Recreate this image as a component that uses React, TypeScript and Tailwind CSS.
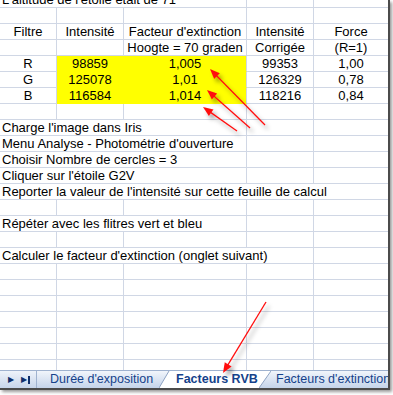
import React from "react";

const COLS = [57, 67, 123, 67, 74];

interface Cell {
  text?: string;
  span?: number;
  align?: "left" | "center";
  yellow?: boolean;
}

const TOP: Cell[][] = [
  [{ text: "L'altitude de l'étoile était de 71", span: 3 }, {}, {}],
  [],
  [
    { text: "Filtre", align: "center" },
    { text: "Intensité", align: "center" },
    { text: "Facteur d'extinction", align: "center" },
    { text: "Intensité", align: "center" },
    { text: "Force", align: "center" },
  ],
  [
    {},
    {},
    { text: "Hoogte = 70 graden", align: "center" },
    { text: "Corrigée", align: "center" },
    { text: "(R=1)", align: "center" },
  ],
  [
    { text: "R", align: "center" },
    { text: "98859", align: "center", yellow: true },
    { text: "1,005", align: "center", yellow: true },
    { text: "99353", align: "center" },
    { text: "1,00", align: "center" },
  ],
  [
    { text: "G", align: "center" },
    { text: "125078", align: "center", yellow: true },
    { text: "1,01", align: "center", yellow: true },
    { text: "126329", align: "center" },
    { text: "0,78", align: "center" },
  ],
  [
    { text: "B", align: "center" },
    { text: "116584", align: "center", yellow: true },
    { text: "1,014", align: "center", yellow: true },
    { text: "118216", align: "center" },
    { text: "0,84", align: "center" },
  ],
  [],
  [{ text: "Charge l'image dans Iris", span: 3 }, {}, {}],
  [{ text: "Menu Analyse - Photométrie d'ouverture", span: 3 }, {}, {}],
  [{ text: "Choisir Nombre de cercles = 3", span: 3 }, {}, {}],
  [{ text: "Cliquer sur l'étoile G2V", span: 3 }, {}, {}],
  [{ text: "Reporter la valeur de l'intensité sur cette feuille de calcul", span: 5 }],
  [],
  [{ text: "Répéter avec les flitres vert et bleu", span: 3 }, {}, {}],
  [],
  [{ text: "Calculer le facteur d'extinction (onglet suivant)", span: 4 }, {}],
];

const ROWS: Cell[][] = [...TOP, ...Array.from({ length: 8 }, () => [] as Cell[])];

// tail -> tip, page coords
const ARROWS = [
  [265, 125, 210, 69],
  [250, 128, 207, 90],
  [237, 131, 203, 107],
  [266, 302, 223, 373],
];

function SheetRow({ cells }: { cells: Cell[] }) {
  const list: Cell[] = cells.length ? cells : COLS.map(() => ({}));
  let col = 0;
  return (
    <div className="flex h-4">
      {list.map((c, i) => {
        const span = c.span ?? 1;
        const width = COLS.slice(col, col + span).reduce((a, b) => a + b, 0);
        const isLast = col + span >= COLS.length;
        col += span;
        return (
          <div
            key={i}
            style={{ width }}
            className={
              "h-4 shrink-0 border-b px-[2px] leading-[15px] whitespace-nowrap " +
              (isLast ? "" : "border-r ") +
              (c.yellow
                ? "bg-[#ffff00] border-b-[#ffff00] " + (i === 1 ? "border-r-[#ffff00] " : "border-r-[#d0d7e5] ")
                : "border-[#d0d7e5] ") +
              (c.align === "center" ? "text-center" : "text-left")
            }
          >
            {c.text}
          </div>
        );
      })}
    </div>
  );
}

function Arrows() {
  return (
    <svg className="pointer-events-none absolute left-0 top-0" width={388} height={388} viewBox="0 0 388 388">
      <defs>
        <filter id="sh" x="-20%" y="-20%" width="160%" height="160%">
          <feDropShadow dx="3" dy="4" stdDeviation="2" floodColor="#000" floodOpacity="0.35" />
        </filter>
      </defs>
      {ARROWS.map(([x1, y1, x2, y2], i) => {
        const len = Math.hypot(x2 - x1, y2 - y1);
        const ux = (x2 - x1) / len;
        const uy = (y2 - y1) / len;
        const bx = x2 - ux * 10;
        const by = y2 - uy * 10;
        const nx = -uy * 4;
        const ny = ux * 4;
        return (
          <g key={i} filter="url(#sh)">
            <line x1={x1} y1={y1} x2={x2 - ux * 8} y2={y2 - uy * 8} stroke="#ff1010" strokeWidth={1.3} />
            <polygon points={`${x2},${y2} ${bx + nx},${by + ny} ${bx - nx},${by - ny}`} fill="#ff1010" />
          </g>
        );
      })}
    </svg>
  );
}

function Slant({ dir }: { dir: "up" | "down" }) {
  // little diagonal edge between sheet tabs
  return (
    <svg width={12} height={17} viewBox="0 0 12 17" className="shrink-0">
      <defs>
        <linearGradient id={"tg" + dir} x1="0" y1="0" x2="0" y2="1">
          <stop offset="0" stopColor="#f1f5fb" />
          <stop offset="1" stopColor="#c5d4ea" />
        </linearGradient>
      </defs>
      {dir === "up" ? (
        <>
          <rect width={12} height={17} fill={`url(#tg${dir})`} />
          <polygon points="0,17 12,17 12,0 10,0" fill="#ffffff" />
          <line x1="0" y1="17" x2="10" y2="0" stroke="#8ea3c3" strokeWidth={1} />
        </>
      ) : (
        <>
          <rect width={12} height={17} fill="#ffffff" />
          <polygon points="12,0 12,17 0,17" fill={`url(#tg${dir})`} />
          <line x1="0" y1="17" x2="12" y2="0" stroke="#8ea3c3" strokeWidth={1} />
        </>
      )}
    </svg>
  );
}

export default function App() {
  return (
    <div className="h-[395px] w-[393px] overflow-hidden bg-white font-['Liberation_Sans',Arial,sans-serif] text-[13px] text-black">
      <div className="relative h-[390px] w-[390px] border-b-2 border-r-2 border-[#4b4b4b] shadow-[2px_2px_3px_rgba(0,0,0,0.4)]">
        {/* Sheet grid */}
        <div className="h-[370px] overflow-hidden">
          <div className="-mt-2">
            {ROWS.map((r, i) => (
              <SheetRow key={i} cells={r} />
            ))}
          </div>
        </div>

        {/* Sheet tabs */}
        <div className="flex h-[18px] border-t border-[#9fb2cf] text-[12.5px] leading-[17px] text-[#15428b]">
          <div className="flex w-[37px] shrink-0 items-center gap-[7px] border-r border-[#9fb2cf] bg-gradient-to-b from-[#eef3fa] to-[#c7d5ea] pl-[8px] text-[8px] text-[#0f2f6b]">
            <span>▶</span>
            <span className="flex items-center">
              ▶<span className="ml-[1px] inline-block h-[8px] w-[1.5px] bg-[#0f2f6b]" />
            </span>
          </div>
          <div className="w-[122px] shrink-0 bg-gradient-to-b from-[#f1f5fb] to-[#c5d4ea] pl-[13px]">Durée d'exposition</div>
          <Slant dir="up" />
          <div className="w-[88px] shrink-0 bg-white pl-[5px] font-bold">Facteurs RVB</div>
          <Slant dir="down" />
          <div className="flex-1 overflow-hidden whitespace-nowrap bg-gradient-to-b from-[#f1f5fb] to-[#c5d4ea] pl-[5px]">Facteurs d'extinction</div>
        </div>

        <Arrows />
      </div>
    </div>
  );
}
